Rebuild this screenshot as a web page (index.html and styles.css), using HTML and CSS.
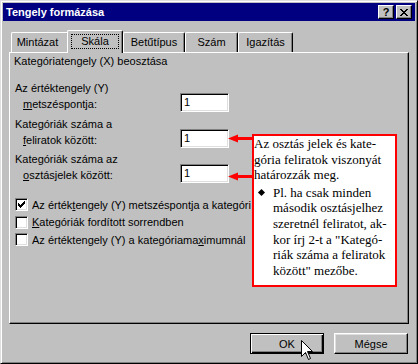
FILE: index.html
```html
<!DOCTYPE html>
<html lang="hu">
<head>
    <meta charset="UTF-8">
    <title>Tengely formázása</title>
    <link rel="stylesheet" href="styles.css">
</head>
<body>
    <div class="window">
        <!-- Title bar -->
        <div class="titlebar">
            <span class="title">Tengely formázása</span>
            <div class="title-buttons">
                <span class="tbtn help">?</span>
                <span class="tbtn close">
                    <svg width="8" height="7" viewBox="0 0 8 7">
                        <path d="M0 0h2v1h1v1h2V1h1V0h2v1H7v1H6v1H5v1h1v1h1v1h1v1H6V6H5V5H3v1H2v1H0V6h1V5h1V4h1V3H2V2H1V1H0z" fill="#000"/>
                    </svg>
                </span>
            </div>
        </div>

        <!-- Tabs -->
        <div class="tabs">
            <div class="tab tab-pattern">Mintázat</div>
            <div class="tab tab-scale active"><span class="focus">Skála</span></div>
            <div class="tab tab-font">Betűtípus</div>
            <div class="tab tab-number">Szám</div>
            <div class="tab tab-align">Igazítás</div>
        </div>

        <!-- Panel -->
        <div class="panel">
            <div class="heading">Kategóriatengely (X) beosztása</div>

            <div class="field field-first">
                <div class="label">Az értéktengely (Y)<br><span class="indent"><u>m</u>etszéspontja:</span></div>
                <div class="input">1</div>
            </div>
            <div class="field field-second">
                <div class="label">Kategóriák száma a<br><span class="indent"><u>f</u>eliratok között:</span></div>
                <div class="input">1</div>
            </div>
            <div class="field field-third">
                <div class="label">Kategóriák száma az<br><span class="indent"><u>o</u>sztásjelek között:</span></div>
                <div class="input">1</div>
            </div>

            <div class="checks">
                <div class="check">
                    <span class="box">
                        <svg width="7" height="7" viewBox="0 0 7 7">
                            <path d="M6 0h1v3H6v1H5v1H4v1H3v1H2V6H1V5H0V2h1v1h1v1h1V3h1V2h1V1h1z" fill="#000"/>
                        </svg>
                    </span>
                    <span class="check-text clipped">Az érték<u>t</u>engely (Y) metszéspontja a kategóriák között</span>
                </div>
                <div class="check">
                    <span class="box"></span>
                    <span class="check-text"><u>K</u>ategóriák fordított sorrendben</span>
                </div>
                <div class="check">
                    <span class="box"></span>
                    <span class="check-text">Az értéktengely (Y) a kategóriama<u>x</u>imumnál</span>
                </div>
            </div>
        </div>

        <!-- Dialog buttons -->
        <div class="buttons">
            <div class="btn btn-default">OK</div>
            <div class="btn">Mégse</div>
        </div>

        <!-- Annotation overlay -->
        <svg class="arrow arrow-first" width="25" height="9" viewBox="0 0 25 9">
            <polygon points="0,4.5 10,0.5 10,8.5" fill="#f00"/>
            <rect x="9" y="3" width="16" height="3" fill="#f00"/>
        </svg>
        <svg class="arrow arrow-second" width="25" height="9" viewBox="0 0 25 9">
            <polygon points="0,4.5 10,0.5 10,8.5" fill="#f00"/>
            <rect x="9" y="3" width="16" height="3" fill="#f00"/>
        </svg>

        <div class="callout">
            <p class="note">Az osztás jelek és kate-<br>gória feliratok viszonyát<br>határozzák meg.</p>
            <div class="note-item">
                <span class="bullet"></span>
                <p>Pl. ha csak minden<br>második osztásjelhez<br>szeretnél feliratot, ak-<br>kor írj 2-t a "Kategó-<br>riák száma a feliratok<br>között" mezőbe.</p>
            </div>
        </div>

        <svg class="cursor" width="12" height="20" viewBox="0 0 12 20">
            <path d="M0.5 0.5V16.5L4.5 12.5L7.5 19.5L9.5 18.5L6.5 11.5H11.5Z" fill="#fff" stroke="#000" stroke-width="1"/>
        </svg>
    </div>
</body>
</html>
```

FILE: styles.css
```css
/* Basic Reset */
body {
    margin: 0;
    background-color: #c0c0c0;
    font-family: 'Liberation Sans', Arial, sans-serif;
    font-size: 11px;
    color: #000000;
}

/* Window frame */
.window {
    position: relative;
    width: 418px;
    height: 364px;
    box-sizing: border-box;
    padding: 2px;
    border: 1px solid;
    border-color: #dfdfdf #000000 #000000 #dfdfdf;
    box-shadow: inset 1px 1px 0 #ffffff, inset -1px -1px 0 #808080;
    background-color: #c0c0c0;
}

/* Title bar */
.titlebar {
    height: 18px;
    background-color: #000080;
    color: #ffffff;
    display: flex;
    align-items: center;
    justify-content: space-between;
    padding: 0 3px 0 3px;
}

.title {
    font-weight: bold;
    font-size: 11px;
}

.title-buttons {
    display: flex;
    gap: 2px;
}

.tbtn {
    width: 16px;
    height: 14px;
    box-sizing: border-box;
    background-color: #c0c0c0;
    color: #000000;
    border: 1px solid;
    border-color: #ffffff #000000 #000000 #ffffff;
    box-shadow: inset -1px -1px 0 #808080;
    display: flex;
    align-items: center;
    justify-content: center;
    font-weight: bold;
    font-size: 11px;
    line-height: 12px;
}

.tbtn svg {
    display: block;
    margin-left: -1px;
}

/* Tabs */
.tabs {
    display: flex;
    align-items: flex-end;
    height: 22px;
    margin-top: 9px;
    padding-left: 8px;
}

.tab {
    height: 20px;
    box-sizing: border-box;
    border-left: 1px solid #ffffff;
    border-top: 1px solid #ffffff;
    border-right: 1px solid #000000;
    border-top-left-radius: 2px;
    border-top-right-radius: 2px;
    box-shadow: inset -1px 0 0 #808080;
    display: flex;
    align-items: center;
    justify-content: center;
    line-height: 13px;
}

.tab-pattern {
    width: 58px;
    margin-right: -2px;
    padding-right: 5px;
}

.tab-scale {
    width: 56px;
}

.tab-font {
    width: 62px;
}

.tab-number {
    width: 53px;
}

.tab-align {
    width: 55px;
}

.tab.active {
    position: relative;
    z-index: 2;
    height: 23px;
    margin-bottom: -1px;
    padding-bottom: 1px;
    background-color: #c0c0c0;
}

.focus {
    padding: 0 9px;
    border: 1px dotted #000000;
    line-height: 13px;
}

/* Panel */
.panel {
    position: relative;
    height: 272px;
    box-sizing: border-box;
    margin: 0 6px;
    padding: 1px 0 0 4px;
    border-left: 1px solid #ffffff;
    border-top: 1px solid #ffffff;
    border-right: 1px solid #000000;
    border-bottom: 1px solid #000000;
    box-shadow: inset -1px -1px 0 #808080;
}

.heading {
    line-height: 15px;
}

.field {
    display: flex;
    align-items: flex-end;
    margin-left: 1px;
}

.field-first {
    margin-top: 11px;
}

.field-second {
    margin-top: 4px;
}

.field-third {
    margin-top: 3px;
}

.label {
    width: 165px;
    line-height: 16px;
}

.indent {
    padding-left: 8px;
}

.input {
    width: 49px;
    height: 19px;
    box-sizing: border-box;
    background-color: #ffffff;
    border: 1px solid;
    border-color: #808080 #ffffff #ffffff #808080;
    box-shadow: inset 1px 1px 0 #000000, inset -1px -1px 0 #dfdfdf;
    padding-left: 3px;
    line-height: 17px;
}

/* Checkboxes */
.checks {
    margin-top: 13px;
    margin-left: 1px;
}

.check {
    height: 17.5px;
    display: flex;
    align-items: center;
    white-space: nowrap;
}

.check-text.clipped {
    width: 219px;
    overflow: hidden;
}

.box {
    flex: none;
    width: 13px;
    height: 13px;
    box-sizing: border-box;
    margin-right: 4px;
    background-color: #ffffff;
    border: 1px solid;
    border-color: #808080 #ffffff #ffffff #808080;
    box-shadow: inset 1px 1px 0 #000000, inset -1px -1px 0 #dfdfdf;
    display: flex;
    align-items: center;
    justify-content: center;
}

.box svg {
    display: block;
}

/* Dialog buttons */
.buttons {
    display: flex;
    justify-content: flex-end;
    gap: 10px;
    margin-top: 9px;
    padding-right: 7px;
}

.btn {
    width: 74px;
    height: 21px;
    box-sizing: border-box;
    border: 1px solid;
    border-color: #ffffff #000000 #000000 #ffffff;
    box-shadow: inset -1px -1px 0 #808080, inset 1px 1px 0 #dfdfdf;
    display: flex;
    align-items: center;
    justify-content: center;
}

.btn-default {
    border-color: #000000;
    box-shadow: inset 1px 1px 0 #ffffff, inset -1px -1px 0 #000000, inset -2px -2px 0 #808080;
}

/* Annotation overlay */
.arrow {
    position: absolute;
    left: 227px;
}

.arrow-first {
    top: 133px;
}

.arrow-second {
    top: 171px;
}

.callout {
    position: absolute;
    left: 251px;
    top: 133px;
    width: 145px;
    height: 153px;
    box-sizing: border-box;
    border: 2px solid #ff0000;
    background-color: #ffffff;
    font-family: 'Liberation Serif', 'Times New Roman', serif;
    font-size: 13px;
    line-height: 15.7px;
    color: #000000;
}

.callout p {
    margin: 0;
}

.note-item {
    display: flex;
    margin-top: 1.5px;
}

.bullet {
    flex: none;
    width: 19px;
    position: relative;
}

.bullet::before {
    content: '';
    position: absolute;
    left: 5px;
    top: 5px;
    width: 5px;
    height: 5px;
    background-color: #000000;
    transform: rotate(45deg);
}

.cursor {
    position: absolute;
    left: 300px;
    top: 339px;
}
```
